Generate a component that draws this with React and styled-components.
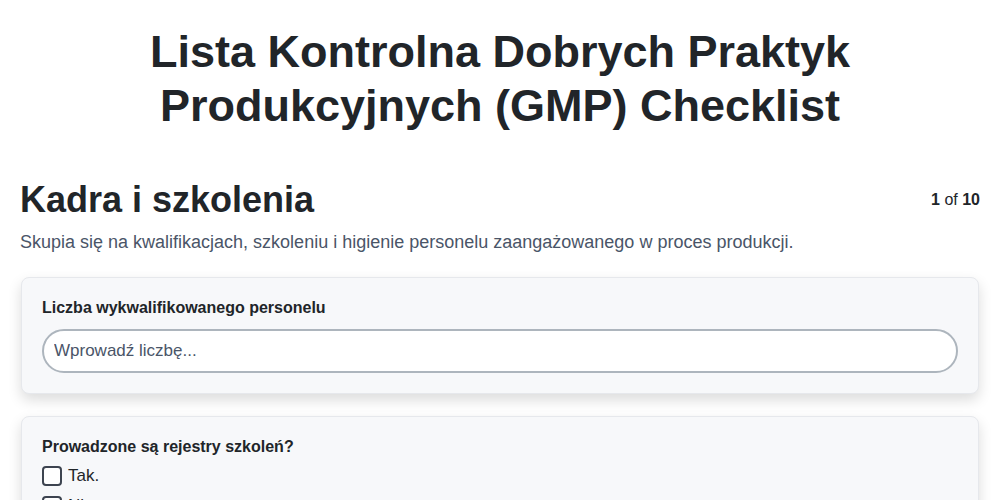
import React from "react";
import styled, { createGlobalStyle } from "styled-components";

const GlobalStyle = createGlobalStyle`
  body {
    margin: 0;
    background: #ffffff;
    font-family: "Liberation Sans", Arial, sans-serif;
    color: #212529;
  }
`;

const Page = styled.div`
  padding: 0 20px;
`;

const Title = styled.h1`
  margin: 25px 0 0;
  text-align: center;
  font-size: 45px;
  line-height: 54px;
  font-weight: 700;
  color: #212529;
`;

const SectionHeader = styled.div`
  display: flex;
  justify-content: space-between;
  align-items: center;
  margin-top: 45px;
`;

const SectionTitle = styled.h2`
  margin: 0;
  font-size: 36px;
  line-height: 43px;
  font-weight: 700;
  color: #212529;
`;

const Counter = styled.div`
  font-size: 16px;
  color: #212529;
  & b {
    font-weight: 700;
  }
`;

const Description = styled.p`
  margin: 11px 0 24px;
  font-size: 18px;
  line-height: 21px;
  color: #4a5568;
`;

const Card = styled.div`
  margin: 0 1px 22px;
  padding: 20px;
  background: #f7f8fa;
  border: 1px solid #e6e8ec;
  border-radius: 8px;
  box-shadow: 0 6px 14px rgba(0, 0, 0, 0.14);
`;

const Label = styled.div`
  font-size: 16px;
  line-height: 20px;
  font-weight: 700;
  color: #212529;
  margin-bottom: ${(p) => (p.$tight ? "4px" : "11px")};
`;

const Input = styled.input`
  display: block;
  box-sizing: border-box;
  width: 100%;
  height: 44px;
  padding: 0 10px;
  border: 2px solid #adb5bd;
  border-radius: 22px;
  background: #ffffff;
  font-family: "Liberation Sans", Arial, sans-serif;
  font-size: 17px;
  color: #212529;
  &::placeholder {
    color: #4a5568;
  }
`;

const Option = styled.label`
  display: flex;
  align-items: center;
  gap: 6px;
  height: 30px;
  font-size: 17px;
  color: #212529;
`;

const Box = styled.span`
  box-sizing: border-box;
  width: 20px;
  height: 20px;
  border: 2px solid #3d4450;
  border-radius: 4px;
  background: #ffffff;
`;

const questions = [
  { type: "number", label: "Liczba wykwalifikowanego personelu", placeholder: "Wprowadź liczbę..." },
  { type: "check", label: "Prowadzone są rejestry szkoleń?", options: ["Tak.", "Nie."] },
];

export default function App() {
  return (
    <>
      <GlobalStyle />
      <Page>
        <Title>Lista Kontrolna Dobrych Praktyk Produkcyjnych (GMP) Checklist</Title>
        <SectionHeader>
          <SectionTitle>Kadra i szkolenia</SectionTitle>
          <Counter>
            <b>1</b> of <b>10</b>
          </Counter>
        </SectionHeader>
        <Description>
          Skupia się na kwalifikacjach, szkoleniu i higienie personelu zaangażowanego w proces produkcji.
        </Description>
        {questions.map((q) => (
          <Card key={q.label}>
            <Label $tight={q.type === "check"}>{q.label}</Label>
            {q.type === "number" ? (
              <Input type="text" placeholder={q.placeholder} />
            ) : (
              q.options.map((o) => (
                <Option key={o}>
                  <Box />
                  {o}
                </Option>
              ))
            )}
          </Card>
        ))}
      </Page>
    </>
  );
}
